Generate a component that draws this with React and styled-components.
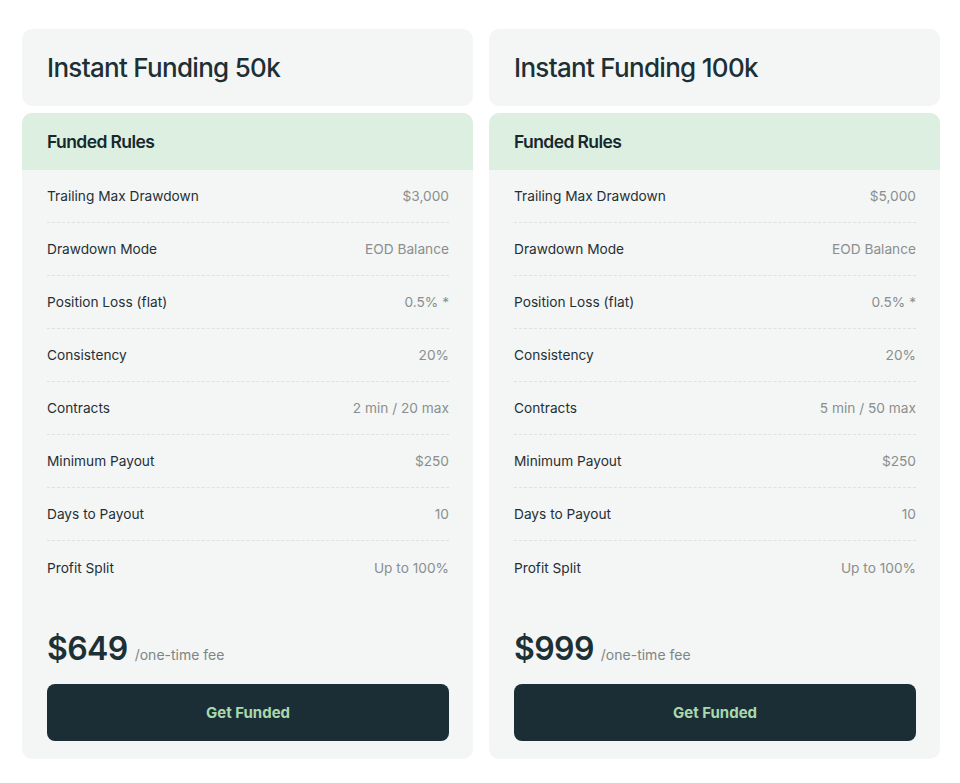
import React from "react";
import styled, { createGlobalStyle } from "styled-components";

const Global = createGlobalStyle`
  body {
    margin: 0;
    background: #ffffff;
    font-family: Inter, "Noto Sans", Arial, sans-serif;
    -webkit-font-smoothing: antialiased;
  }
  * {
    box-sizing: border-box;
  }
`;

const Page = styled.div`
  display: grid;
  grid-template-columns: 451px 451px;
  gap: 16px;
  padding: 29px 20px 24px 22px;
`;

const Column = styled.div`
  display: flex;
  flex-direction: column;
  gap: 7px;
`;

const TitleCard = styled.div`
  background: #f4f6f5;
  border-radius: 10px;
  height: 77px;
  display: flex;
  align-items: center;
  padding: 0 25px;
`;

const Title = styled.h2`
  margin: 0;
  font-size: 26px;
  font-weight: 500;
  letter-spacing: -0.7px;
  color: #1c3035;
`;

const RulesCard = styled.div`
  background: #f4f6f5;
  border-radius: 10px;
  overflow: hidden;
  padding-bottom: 18px;
`;

const RulesHeader = styled.div`
  background: #ddefe0;
  height: 57px;
  display: flex;
  align-items: center;
  padding: 0 25px 1px;
  font-size: 17.5px;
  font-weight: 600;
  letter-spacing: -0.6px;
  color: #16282c;
`;

const RuleList = styled.div`
  padding: 0 24px 0 25px;
`;

const Rule = styled.div`
  height: 53px;
  display: flex;
  align-items: center;
  justify-content: space-between;
  font-size: 13.7px;
  border-bottom: 1px dashed #dde1df;
  &:last-child {
    border-bottom: none;
  }
`;

const Label = styled.span`
  color: #1f3035;
`;

const Value = styled.span`
  color: #8a8f8e;
`;

const PriceRow = styled.div`
  display: flex;
  align-items: baseline;
  gap: 7px;
  padding: 35px 24px 0 25px;
`;

const Price = styled.span`
  font-size: 32px;
  font-weight: 600;
  letter-spacing: -0.6px;
  color: #1c3035;
`;

const Fee = styled.span`
  font-size: 14px;
  color: #7e8584;
`;

const Button = styled.button`
  display: block;
  width: calc(100% - 49px);
  margin: 16px 24px 0 25px;
  height: 57px;
  border: none;
  border-radius: 8px;
  background: #1b2e35;
  color: #a9d8ad;
  font-family: inherit;
  font-size: 15px;
  font-weight: 700;
  cursor: pointer;
`;

const plans = [
  {
    title: "Instant Funding 50k",
    price: "$649",
    rules: [
      ["Trailing Max Drawdown", "$3,000"],
      ["Drawdown Mode", "EOD Balance"],
      ["Position Loss (flat)", "0.5% *"],
      ["Consistency", "20%"],
      ["Contracts", "2 min / 20 max"],
      ["Minimum Payout", "$250"],
      ["Days to Payout", "10"],
      ["Profit Split", "Up to 100%"],
    ],
  },
  {
    title: "Instant Funding 100k",
    price: "$999",
    rules: [
      ["Trailing Max Drawdown", "$5,000"],
      ["Drawdown Mode", "EOD Balance"],
      ["Position Loss (flat)", "0.5% *"],
      ["Consistency", "20%"],
      ["Contracts", "5 min / 50 max"],
      ["Minimum Payout", "$250"],
      ["Days to Payout", "10"],
      ["Profit Split", "Up to 100%"],
    ],
  },
];

export default function App() {
  return (
    <>
      <Global />
      <Page>
        {plans.map((plan) => (
          <Column key={plan.title}>
            <TitleCard>
              <Title>{plan.title}</Title>
            </TitleCard>
            <RulesCard>
              <RulesHeader>Funded Rules</RulesHeader>
              <RuleList>
                {plan.rules.map(([label, value]) => (
                  <Rule key={label}>
                    <Label>{label}</Label>
                    <Value>{value}</Value>
                  </Rule>
                ))}
              </RuleList>
              <PriceRow>
                <Price>{plan.price}</Price>
                <Fee>/one-time fee</Fee>
              </PriceRow>
              <Button>Get Funded</Button>
            </RulesCard>
          </Column>
        ))}
      </Page>
    </>
  );
}
